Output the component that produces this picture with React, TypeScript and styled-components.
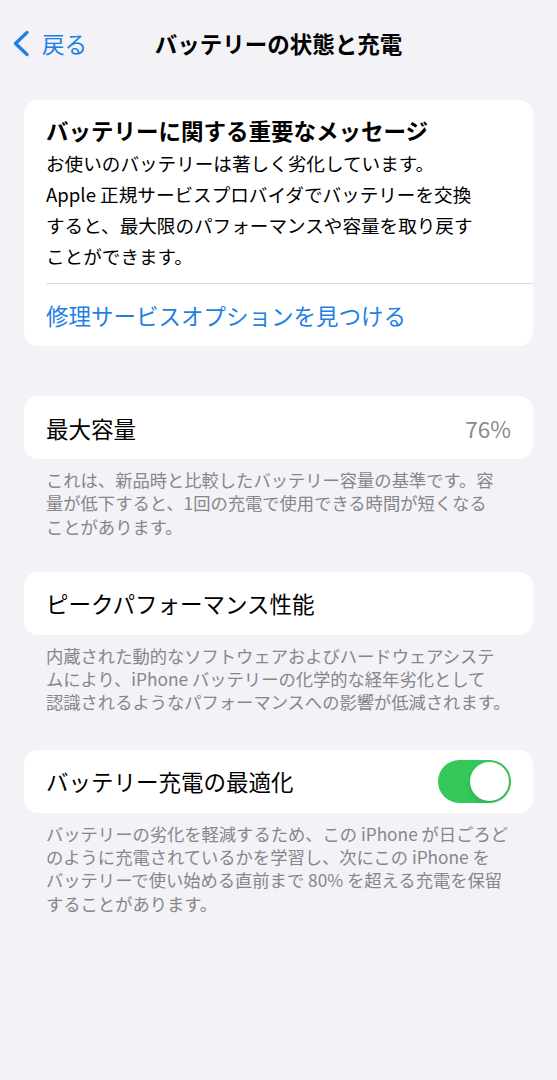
import React, { useState } from "react";
import styled, { createGlobalStyle } from "styled-components";

const GlobalStyle = createGlobalStyle`
  html, body {
    margin: 0;
    padding: 0;
    background: #f2f2f7;
  }
  body {
    font-family: "Noto Sans CJK JP", "Noto Sans", Inter, sans-serif;
    color: #000;
  }
`;

const Page = styled.div`
  width: 557px;
  min-height: 1080px;
  background: #f2f2f7;
  padding: 0 24px;
  box-sizing: border-box;
`;

const NavBar = styled.div`
  position: relative;
  height: 86px;
  margin: 0 -24px;
  display: flex;
  align-items: center;
  justify-content: center;
`;

const BackButton = styled.button`
  position: absolute;
  left: 12px;
  top: 28px;
  display: flex;
  align-items: center;
  gap: 12px;
  border: none;
  background: none;
  padding: 0;
  color: #1f7fe4;
  font-family: inherit;
  font-size: 22.5px;
  line-height: 30px;
  cursor: pointer;
`;

const NavTitle = styled.div`
  font-size: 22.5px;
  font-weight: 700;
  line-height: 30px;
`;

const Card = styled.div`
  background: #fff;
  border-radius: 14px;
  overflow: hidden;
`;

const MessageBlock = styled.div`
  padding: 15px 22px 12px;
`;

const MessageTitle = styled.div`
  font-size: 22.5px;
  font-weight: 700;
  line-height: 30px;
`;

const MessageBody = styled.div`
  margin-top: 2px;
  font-size: 18.6px;
  line-height: 31px;
`;

const Divider = styled.div`
  height: 1px;
  background: #dcdce0;
  margin-left: 22px;
`;

const LinkRow = styled.div`
  height: 62px;
  padding: 0 22px;
  display: flex;
  align-items: center;
  color: #1f7fe4;
  font-size: 22.5px;
`;

const Row = styled.div`
  height: 63px;
  padding: 0 22px;
  display: flex;
  align-items: center;
  justify-content: space-between;
  font-size: 22.5px;
`;

const Value = styled.span`
  color: #8a8a8e;
`;

const Footer = styled.div`
  padding: 9px 22px 0;
  color: #86868b;
  font-size: 17.3px;
  line-height: 23.3px;
`;

const Section = styled.div<{ $gap: number }>`
  margin-top: ${(p) => p.$gap}px;
`;

const Toggle = styled.button<{ $on: boolean }>`
  width: 73px;
  height: 43px;
  border-radius: 22px;
  border: none;
  padding: 2px;
  background: ${(p) => (p.$on ? "#34c759" : "#e5e5ea")};
  display: flex;
  justify-content: ${(p) => (p.$on ? "flex-end" : "flex-start")};
  cursor: pointer;
`;

const Knob = styled.span`
  width: 39px;
  height: 39px;
  border-radius: 50%;
  background: #fff;
  box-shadow: 0 2px 4px rgba(0, 0, 0, 0.12);
`;

function Chevron() {
  return (
    <svg width="18" height="27" viewBox="0 0 18 27">
      <path
        d="M15 2.5 L3.5 13.5 L15 24.5"
        fill="none"
        stroke="#1f7fe4"
        strokeWidth="3.4"
        strokeLinecap="round"
        strokeLinejoin="round"
      />
    </svg>
  );
}

export default function App() {
  const [optimized, setOptimized] = useState(true);

  return (
    <Page>
      <GlobalStyle />
      <NavBar>
        <BackButton>
          <Chevron />
          戻る
        </BackButton>
        <NavTitle>バッテリーの状態と充電</NavTitle>
      </NavBar>

      <Section $gap={14}>
        <Card>
          <MessageBlock>
            <MessageTitle>バッテリーに関する重要なメッセージ</MessageTitle>
            <MessageBody>
              お使いのバッテリーは著しく劣化しています。
              <br />
              Apple 正規サービスプロバイダでバッテリーを交換
              <br />
              すると、最大限のパフォーマンスや容量を取り戻す
              <br />
              ことができます。
            </MessageBody>
          </MessageBlock>
          <Divider />
          <LinkRow>修理サービスオプションを見つける</LinkRow>
        </Card>
      </Section>

      <Section $gap={50}>
        <Card>
          <Row>
            最大容量
            <Value>76%</Value>
          </Row>
        </Card>
        <Footer>
          これは、新品時と比較したバッテリー容量の基準です。容
          <br />
          量が低下すると、1回の充電で使用できる時間が短くなる
          <br />
          ことがあります。
        </Footer>
      </Section>

      <Section $gap={34}>
        <Card>
          <Row>ピークパフォーマンス性能</Row>
        </Card>
        <Footer>
          内蔵された動的なソフトウェアおよびハードウェアシステ
          <br />
          ムにより、iPhone バッテリーの化学的な経年劣化として
          <br />
          認識されるようなパフォーマンスへの影響が低減されます。
        </Footer>
      </Section>

      <Section $gap={36}>
        <Card>
          <Row>
            バッテリー充電の最適化
            <Toggle $on={optimized} onClick={() => setOptimized(!optimized)}>
              <Knob />
            </Toggle>
          </Row>
        </Card>
        <Footer>
          バッテリーの劣化を軽減するため、この iPhone が日ごろど
          <br />
          のように充電されているかを学習し、次にこの iPhone を
          <br />
          バッテリーで使い始める直前まで 80% を超える充電を保留
          <br />
          することがあります。
        </Footer>
      </Section>
    </Page>
  );
}
